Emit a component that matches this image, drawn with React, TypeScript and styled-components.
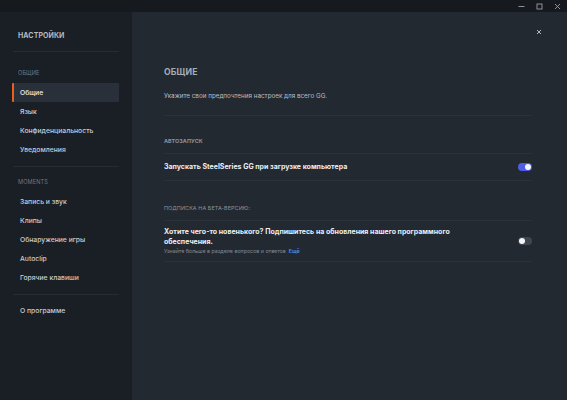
import styled, { createGlobalStyle } from "styled-components";

const GlobalStyle = createGlobalStyle`
    html, body {
        margin: 0;
        padding: 0;
        background: #16191d;
    }
    * {
        box-sizing: border-box;
    }
`;

const Window = styled.div`
    width: 567px;
    height: 400px;
    display: flex;
    flex-direction: column;
    font-family: Inter, "Noto Sans", sans-serif;
    overflow: hidden;
`;

const TitleBar = styled.div`
    height: 12px;
    background: #16191d;
    display: flex;
    justify-content: flex-end;
    align-items: center;
    padding-right: 1px;
`;

const WinButton = styled.div`
    width: 18px;
    height: 12px;
    display: flex;
    align-items: center;
    justify-content: center;
    color: #9aa0a8;
`;

const Body = styled.div`
    flex: 1;
    display: flex;
    min-height: 0;
`;

const Sidebar = styled.nav`
    width: 132px;
    background: #1a1f26;
    padding: 0 13px 0 12px;
    display: flex;
    flex-direction: column;
`;

const SideTitle = styled.div`
    margin-top: 19px;
    padding-left: 6px;
    height: 10px;
    line-height: 10px;
    font-size: 7px;
    font-weight: 700;
    color: #b4bac3;
    letter-spacing: 0.1px;
`;

const SideDivider = styled.div<{ top: number; bottom: number }>`
    height: 1px;
    background: #262c34;
    margin: ${({ top, bottom }) => `${top}px 0 ${bottom}px 1px`};
`;

const SectionLabel = styled.div<{ top: number }>`
    margin-top: ${({ top }) => top}px;
    margin-bottom: 5px;
    padding-left: 6px;
    height: 10px;
    line-height: 10px;
    font-size: 5.6px;
    color: #717883;
    letter-spacing: 0.1px;
`;

const NavItem = styled.div<{ active?: boolean }>`
    height: 19px;
    line-height: 19px;
    padding-left: 6px;
    font-size: 6.8px;
    font-weight: 500;
    color: ${({ active }) => (active ? "#eef0f3" : "#c9ced5")};
    background: ${({ active }) => (active ? "#2a3039" : "transparent")};
    border-left: 2px solid ${({ active }) => (active ? "#e8601c" : "transparent")};
    border-radius: 1px;
`;

const Main = styled.main`
    flex: 1;
    position: relative;
    background: #232931;
    padding: 0 35px 0 32px;
    display: flex;
    flex-direction: column;
`;

const CloseButton = styled.div`
    position: absolute;
    top: 16px;
    right: 24px;
    width: 8px;
    height: 8px;
    display: flex;
    align-items: center;
    justify-content: center;
    color: #b3b8c0;
`;

const PageTitle = styled.h1`
    margin: 54px 0 0;
    height: 12px;
    line-height: 12px;
    font-size: 8.6px;
    font-weight: 700;
    color: #a7adb6;
    letter-spacing: 0.2px;
`;

const Description = styled.p`
    margin: 13px 0 14px;
    height: 10px;
    line-height: 10px;
    font-size: 6.3px;
    color: #b9bec6;
`;

const Divider = styled.div`
    height: 1px;
    background: #2b3139;
`;

const GroupLabel = styled.div<{ bold?: boolean; top: number }>`
    margin: ${({ top }) => top}px 0 8px;
    height: 8px;
    line-height: 8px;
    font-size: 5.4px;
    font-weight: ${({ bold }) => (bold ? 700 : 400)};
    color: #8d939c;
    letter-spacing: 0.1px;
`;

const Row = styled.div<{ pad: number }>`
    display: flex;
    align-items: center;
    justify-content: space-between;
    padding: ${({ pad }) => `${pad}px 0`};
    border-top: 1px solid #2b3139;
    border-bottom: 1px solid #2b3139;
`;

const RowText = styled.div`
    display: flex;
    flex-direction: column;
    max-width: 320px;
`;

const RowTitle = styled.div`
    font-size: 7px;
    line-height: 10px;
    font-weight: 700;
    color: #eceef1;
`;

const RowHint = styled.div`
    font-size: 5.3px;
    line-height: 8px;
    color: #858b94;
`;

const HintLink = styled.span`
    color: #4b8ff0;
    font-weight: 600;
    margin-left: 3px;
`;

const Toggle = styled.div<{ on?: boolean }>`
    width: 14px;
    height: 8px;
    border-radius: 4px;
    background: ${({ on }) => (on ? "#4f5ce6" : "#40464f")};
    display: flex;
    align-items: center;
    justify-content: ${({ on }) => (on ? "flex-end" : "flex-start")};
    padding: 0 1px;
`;

const Knob = styled.div`
    width: 6px;
    height: 6px;
    border-radius: 50%;
    background: #f4f5f7;
`;

const mainItems = ["Язык", "Конфиденциальность", "Уведомления"];
const momentItems = ["Запись и звук", "Клипы", "Обнаружение игры", "Autoclip", "Горячие клавиши"];

export default function App() {
    return (
        <>
            <GlobalStyle />
            <Window>
                <TitleBar>
                    <WinButton>
                        <svg width="7" height="7" viewBox="0 0 7 7">
                            <line x1="0.5" y1="3.5" x2="6.5" y2="3.5" stroke="currentColor" strokeWidth="0.9" />
                        </svg>
                    </WinButton>
                    <WinButton>
                        <svg width="7" height="7" viewBox="0 0 7 7">
                            <rect x="1" y="1" width="5" height="5" fill="none" stroke="currentColor" strokeWidth="0.9" />
                        </svg>
                    </WinButton>
                    <WinButton>
                        <svg width="7" height="7" viewBox="0 0 7 7">
                            <path d="M1 1L6 6M6 1L1 6" stroke="currentColor" strokeWidth="0.9" />
                        </svg>
                    </WinButton>
                </TitleBar>
                <Body>
                    <Sidebar>
                        <SideTitle>НАСТРОЙКИ</SideTitle>
                        <SideDivider top={10} bottom={0} />
                        <SectionLabel top={16}>ОБЩИЕ</SectionLabel>
                        <NavItem active>Общие</NavItem>
                        {mainItems.map((t) => (
                            <NavItem key={t}>{t}</NavItem>
                        ))}
                        <SideDivider top={7} bottom={0} />
                        <SectionLabel top={10}>MOMENTS</SectionLabel>
                        {momentItems.map((t) => (
                            <NavItem key={t}>{t}</NavItem>
                        ))}
                        <SideDivider top={7} bottom={6} />
                        <NavItem>О программе</NavItem>
                    </Sidebar>
                    <Main>
                        <CloseButton>
                            <svg width="6" height="6" viewBox="0 0 6 6">
                                <path d="M1 1L5 5M5 1L1 5" stroke="currentColor" strokeWidth="1" />
                            </svg>
                        </CloseButton>
                        <PageTitle>ОБЩИЕ</PageTitle>
                        <Description>Укажите свои предпочтения настроек для всего GG.</Description>
                        <Divider />
                        <GroupLabel bold top={21}>АВТОЗАПУСК</GroupLabel>
                        <Row pad={8}>
                            <RowText>
                                <RowTitle>Запускать SteelSeries GG при загрузке компьютера</RowTitle>
                            </RowText>
                            <Toggle on>
                                <Knob />
                            </Toggle>
                        </Row>
                        <GroupLabel top={23}>ПОДПИСКА НА БЕТА-ВЕРСИЮ:</GroupLabel>
                        <Row pad={6}>
                            <RowText>
                                <RowTitle>
                                    Хотите чего-то новенького? Подпишитесь на обновления нашего программного обеспечения.
                                </RowTitle>
                                <RowHint>
                                    Узнайте больше в разделе вопросов и ответов<HintLink>Ещё</HintLink>
                                </RowHint>
                            </RowText>
                            <Toggle>
                                <Knob />
                            </Toggle>
                        </Row>
                    </Main>
                </Body>
            </Window>
        </>
    );
}
